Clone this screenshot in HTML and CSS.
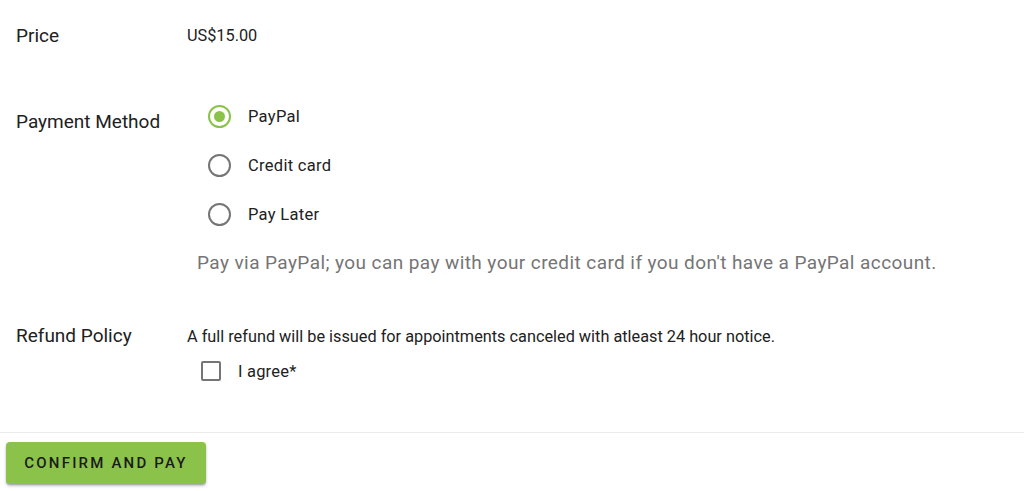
FILE: index.html
```html
<!DOCTYPE html>
<html>
<head>
<meta charset="utf-8">
<link rel="stylesheet" href="styles.css">
</head>
<body>
<div class="form">
  <div class="row row-price">
    <div class="label">Price</div>
    <div class="value price">US$15.00</div>
  </div>
  <div class="row row-payment">
    <div class="label label-payment">Payment Method</div>
    <div class="value">
      <div class="radios">
        <label class="radio"><span class="circle checked"><span class="dot"></span></span><span class="radio-text">PayPal</span></label>
        <label class="radio"><span class="circle"></span><span class="radio-text">Credit card</span></label>
        <label class="radio"><span class="circle"></span><span class="radio-text">Pay Later</span></label>
      </div>
      <div class="hint">Pay via PayPal; you can pay with your credit card if you don't have a PayPal account.</div>
    </div>
  </div>
  <div class="row row-refund">
    <div class="label">Refund Policy</div>
    <div class="value">
      <div class="refund-text">A full refund will be issued for appointments canceled with atleast 24 hour notice.</div>
      <label class="check"><span class="box"></span><span class="check-text">I agree*</span></label>
    </div>
  </div>
</div>
<div class="footer">
  <button class="btn">CONFIRM AND PAY</button>
</div>
</body>
</html>
```

FILE: styles.css
```css
html, body {
  margin: 0;
  padding: 0;
  background: #ffffff;
}
body {
  font-family: Roboto, "Liberation Sans", sans-serif;
  color: #212121;
  width: 1024px;
  height: 491px;
  overflow: hidden;
}
.form {
  padding-left: 16px;
}
.row {
  display: flex;
  align-items: flex-start;
}
.label {
  width: 171px;
  flex: none;
  font-size: 19px;
  line-height: 24px;
  color: #212121;
}
.row-price {
  padding-top: 24px;
}
.price {
  font-size: 16.3px;
  line-height: 24px;
}
.row-payment {
  margin-top: 44px;
}
.label-payment {
  padding-top: 18px;
}
.radios {
  display: flex;
  flex-direction: column;
}
.radio {
  display: flex;
  align-items: center;
  height: 49px;
  padding-left: 21px;
}
.circle {
  width: 23px;
  height: 23px;
  box-sizing: border-box;
  border: 2px solid #757575;
  border-radius: 50%;
  display: flex;
  align-items: center;
  justify-content: center;
  flex: none;
}
.circle.checked {
  border-color: #8bc34a;
}
.dot {
  width: 11px;
  height: 11px;
  border-radius: 50%;
  background: #8bc34a;
}
.radio-text {
  margin-left: 17px;
  font-size: 16.5px;
  color: #212121;
  letter-spacing: 0.3px;
}
.hint {
  margin-top: 12px;
  margin-left: 10px;
  font-size: 19px;
  line-height: 24px;
  color: #757575;
  letter-spacing: 0.42px;
  white-space: nowrap;
}
.row-refund {
  margin-top: 49px;
}
.refund-text {
  font-size: 16.3px;
  line-height: 26px;
  white-space: nowrap;
}
.check {
  display: flex;
  align-items: center;
  margin-top: 9px;
  height: 24px;
  padding-left: 14px;
}
.box {
  width: 20px;
  height: 20px;
  box-sizing: border-box;
  border: 2px solid #757575;
  border-radius: 2px;
  flex: none;
}
.check-text {
  margin-left: 17px;
  font-size: 16.5px;
  letter-spacing: 0.2px;
}
.footer {
  margin-top: 49px;
  border-top: 1px solid #ebebeb;
  padding: 9px 6px 0;
}
.btn {
  width: 200px;
  height: 42px;
  border: none;
  border-radius: 4px;
  background: #8bc34a;
  color: #1b1b1b;
  font-family: Roboto, "Liberation Sans", sans-serif;
  font-size: 15px;
  font-weight: 500;
  letter-spacing: 2.2px;
  box-shadow: 0 2px 3px rgba(0,0,0,0.25), 0 1px 1px rgba(0,0,0,0.14);
  padding: 0;
}
```
